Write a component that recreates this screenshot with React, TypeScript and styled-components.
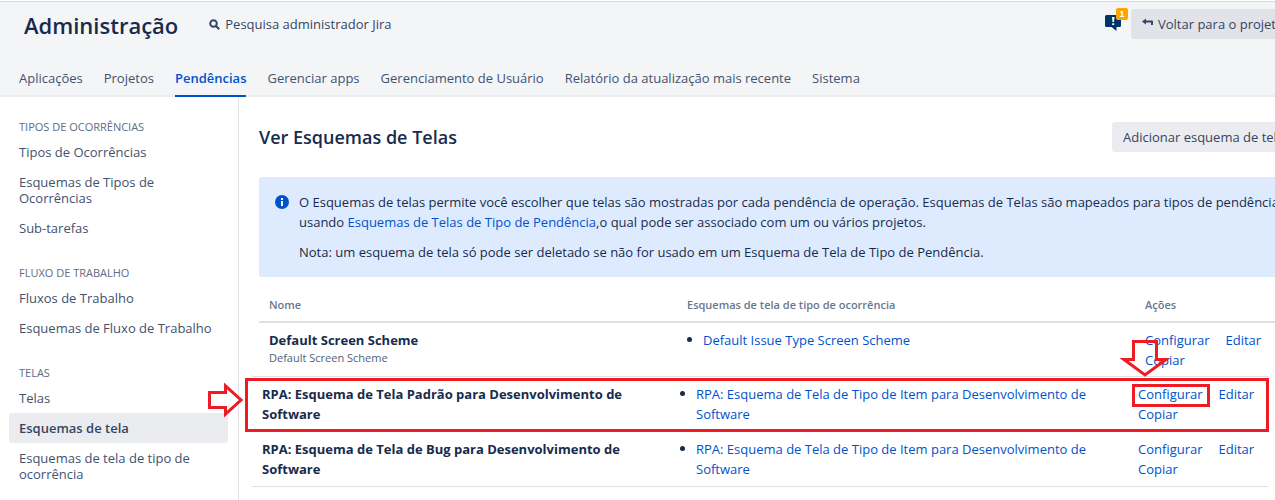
import React from 'react';
import styled, { createGlobalStyle, css } from 'styled-components';

const GlobalStyle = createGlobalStyle`
  * { box-sizing: border-box; }
  body {
    margin: 0;
    background: #fff;
    color: #172b4d;
    font: 13px/20px "Open Sans", "Noto Sans", sans-serif;
    overflow: hidden;
  }
  h1, h2, h3, p, ul { margin: 0; padding: 0; }
  ul { list-style: none; }
`;

const Page = styled.div`
  overflow: hidden;
  padding-top: 1px;
`;

const Header = styled.header`
  background: #f4f5f7;
  border-top: 1px solid #d5d9e0;
  border-bottom: 2px solid #ebecf0;
`;

const TopBar = styled.div`
  display: flex;
  align-items: center;
  padding: 6px 0 0 24px;
  margin-right: -28px;
`;

const SiteTitle = styled.h1`
  font-size: 22px;
  line-height: 30px;
  font-weight: 600;
  padding-top: 2px;
`;

const SearchLink = styled.a`
  display: flex;
  align-items: center;
  gap: 5px;
  margin-left: 31px;
  color: #344563;
  text-decoration: none;
`;

const Feedback = styled.button`
  position: relative;
  display: flex;
  margin-left: auto;
  margin-right: 10px;
  padding: 0 0 2px;
  border: 0;
  background: none;
`;

const Badge = styled.span`
  position: absolute;
  top: -7px;
  right: -7px;
  width: 12px;
  height: 12px;
  border-radius: 2px;
  background: #ffa500;
  color: #fff;
  font-size: 9px;
  line-height: 12px;
  font-weight: 700;
  text-align: center;
`;

const Button = styled.button<{ $width: number; $strong?: boolean }>`
  display: flex;
  align-items: center;
  gap: 4px;
  flex: none;
  width: ${(p) => p.$width}px;
  height: 30px;
  padding: 0 11px;
  border: 0;
  border-radius: 3px;
  background: ${(p) => (p.$strong ? '#e1e3e9' : '#ebecf0')};
  color: #344563;
  font: inherit;
  white-space: nowrap;
`;

const Tabs = styled.nav`
  display: flex;
  gap: 21px;
  padding: 28px 19px 0;
`;

const Tab = styled.a<{ $active?: boolean }>`
  padding-bottom: 7px;
  margin-bottom: -2px;
  border-bottom: 2px solid transparent;
  color: #42526e;
  text-decoration: none;
  white-space: nowrap;
  ${(p) => p.$active && css`
    color: #0052cc;
    font-weight: 600;
    border-color: #0052cc;
  `}
`;

const Body = styled.div`
  display: flex;
`;

const Sidebar = styled.aside`
  display: flex;
  flex-direction: column;
  gap: 20px;
  flex: 0 0 239px;
  padding: 20px 10px 20px 9px;
  border-right: 1px solid #dfe1e6;
`;

const GroupTitle = styled.h3`
  padding: 0 10px;
  color: #5e6c84;
  font-size: 11px;
  line-height: 20px;
  font-weight: 500;
  text-transform: uppercase;
`;

const SideLink = styled.a<{ $active?: boolean }>`
  display: block;
  padding: 7px 10px;
  border-radius: 3px;
  color: #42526e;
  line-height: 16px;
  text-decoration: none;
  ${(p) => p.$active && css`
    background: #ebecf0;
    color: #344563;
    font-weight: 600;
  `}
`;

const Main = styled.main`
  flex: 1;
  min-width: 0;
  padding: 25px 0 12px 20px;
`;

const TitleRow = styled.div`
  display: flex;
  align-items: center;
  justify-content: space-between;
  margin-right: -28px;
`;

const PageTitle = styled.h2`
  font-size: 18px;
  line-height: 30px;
  font-weight: 600;
`;

const Message = styled.section`
  display: flex;
  gap: 10px;
  margin: 25px -28px 0 0;
  padding: 15px 16px;
  border-radius: 3px;
  background: #deebff;
  white-space: nowrap;
  svg { flex: none; margin-top: 3px; }
  p + p { margin-top: 10px; }
`;

const Link = styled.a`
  color: #0052cc;
  text-decoration: none;
`;

const Table = styled.table`
  width: 100%;
  table-layout: fixed;
  border-collapse: separate;
  border-spacing: 0;
  col:nth-child(1) { width: 418px; }
  col:nth-child(3) { width: 140px; }
`;

const HeadCell = styled.th`
  padding: 18px 10px 6px;
  border-bottom: 2px solid #dfe1e6;
  color: #6b778c;
  font-size: 11px;
  line-height: 20px;
  font-weight: 600;
  text-align: left;
`;

const Cell = styled.td`
  padding: 7px 10px 6px;
  vertical-align: top;
`;

const RowsBelow = styled.div`
  position: relative;
  margin: 0 7px 0 -7px;
  border-top: 1px solid #dfe1e6;
  ${Cell} {
    padding: 7px 10px;
    border-bottom: 1px solid #dfe1e6;
  }
`;

const SchemeName = styled.strong`
  font-weight: 700;
`;

const Description = styled.div`
  color: #505f79;
  font-size: 11px;
  line-height: 16px;
`;

const SchemeList = styled.ul`
  list-style: none;
`;

const SchemeItem = styled.li`
  display: flex;
  gap: 11px;
  &::before {
    content: "";
    flex: none;
    width: 5px;
    height: 5px;
    margin-top: 7px;
    border-radius: 50%;
    background: #172b4d;
  }
`;

const Actions = styled.div`
  display: flex;
  flex-wrap: wrap;
  column-gap: 16px;
`;

const Anchor = styled.span`
  position: relative;
`;

const RowFrame = styled.div`
  position: absolute;
  top: 1px;
  left: -7px;
  right: -1px;
  height: 54px;
  border: 3px solid #ed1c24;
  pointer-events: none;
`;

const LinkFrame = styled.span`
  position: absolute;
  top: 0;
  left: -6px;
  right: -7px;
  height: 23px;
  border: 3px solid #ed1c24;
  pointer-events: none;
`;

const Arrow = styled.svg<{ $left: number; $top: number }>`
  position: absolute;
  left: ${(p) => p.$left}px;
  top: ${(p) => p.$top}px;
  fill: none;
  stroke: #ed1c24;
  stroke-width: 3;
  pointer-events: none;
`;

const tabs = ['Aplicações', 'Projetos', 'Pendências', 'Gerenciar apps', 'Gerenciamento de Usuário', 'Relatório da atualização mais recente', 'Sistema'];

const groups = [
  { title: 'Tipos de Ocorrências', links: ['Tipos de Ocorrências', 'Esquemas de Tipos de Ocorrências', 'Sub-tarefas'] },
  { title: 'Fluxo de Trabalho', links: ['Fluxos de Trabalho', 'Esquemas de Fluxo de Trabalho'] },
  { title: 'Telas', links: ['Telas', 'Esquemas de tela', 'Esquemas de tela de tipo de ocorrência'] },
];

type RowProps = { name: string; description?: string; scheme: string; marked?: boolean };

function SchemeRow({ name, description, scheme, marked }: RowProps) {
  return (
    <tr>
      <Cell>
        <SchemeName>{name}</SchemeName>
        {description && <Description>{description}</Description>}
      </Cell>
      <Cell>
        <SchemeList>
          <SchemeItem><Link href="#esquema">{scheme}</Link></SchemeItem>
        </SchemeList>
      </Cell>
      <Cell>
        <Actions>
          <Anchor>
            <Link href="#configurar">Configurar</Link>
            {marked && (
              <>
                <LinkFrame />
                <Arrow $left={-18} $top={-46} width="50" height="40" aria-hidden="true">
                  <path d="M13.5 3.5H36.5V21.5H46L25 37L4 21.5H13.5Z" />
                </Arrow>
              </>
            )}
          </Anchor>
          <Link href="#editar">Editar</Link>
          <Link href="#copiar">Copiar</Link>
        </Actions>
      </Cell>
    </tr>
  );
}

const Columns = () => (
  <colgroup><col /><col /><col /></colgroup>
);

export default function App() {
  return (
    <Page>
      <GlobalStyle />
      <Header>
        <TopBar>
          <SiteTitle>Administração</SiteTitle>
          <SearchLink href="#pesquisa">
            <svg width="11" height="11" viewBox="0 0 11 11" fill="none" stroke="#344563" strokeWidth="2" aria-hidden="true">
              <circle cx="4.5" cy="4.5" r="3.3" />
              <path d="M7 7L10.2 10.2" />
            </svg>
            Pesquisa administrador Jira
          </SearchLink>
          <Feedback aria-label="Notificações">
            <svg width="16" height="16" viewBox="0 0 16 16" aria-hidden="true">
              <path d="M1.5 0H14.5Q16 0 16 1.500V10.500Q16 12 14.500 12H11.500V16L6.500 12H1.500Q0 12 0 10.500V1.500Q0 0 1.500 0Z" fill="#003366" />
              <path d="M7 2H9.500L9 7H7.500ZM7.200 8.200H9.200V10H7.200Z" fill="#fff" />
            </svg>
            <Badge>1</Badge>
          </Feedback>
          <Button $width={172} $strong>
            <svg width="12" height="12" viewBox="0 0 12 12" fill="#344563" aria-hidden="true">
              <path d="M0 3.500L4 0.500V2.500H10Q11 2.500 11 3.500V7H9V4.500H4V6.500Z" />
            </svg>
            Voltar para o projeto
          </Button>
        </TopBar>
        <Tabs>
          {tabs.map((tab) => (
            <Tab key={tab} href="#aba" $active={tab === 'Pendências'}>{tab}</Tab>
          ))}
        </Tabs>
      </Header>
      <Body>
        <Sidebar>
          {groups.map((group) => (
            <nav key={group.title} aria-label={group.title}>
              <GroupTitle>{group.title}</GroupTitle>
              {group.links.map((link) => (
                <SideLink key={link} href="#secao" $active={link === 'Esquemas de tela'}>{link}</SideLink>
              ))}
            </nav>
          ))}
        </Sidebar>
        <Main>
          <TitleRow>
            <PageTitle>Ver Esquemas de Telas</PageTitle>
            <Button $width={191}>Adicionar esquema de tela</Button>
          </TitleRow>
          <Message>
            <svg width="14" height="14" viewBox="0 0 14 14" aria-hidden="true">
              <circle cx="7" cy="7" r="7" fill="#0052cc" />
              <path d="M6 3H8V5H6ZM6 6H8V11H6Z" fill="#fff" />
            </svg>
            <div>
              <p>
                O Esquemas de telas permite você escolher que telas são mostradas por cada pendência de operação. Esquemas de Telas são mapeados para tipos de pendências
                <br />
                usando <Link href="#tipos">Esquemas de Telas de Tipo de Pendência</Link>,o qual pode ser associado com um ou vários projetos.
              </p>
              <p>Nota: um esquema de tela só pode ser deletado se não for usado em um Esquema de Tela de Tipo de Pendência.</p>
            </div>
          </Message>
          <Table>
            <Columns />
            <thead>
              <tr>
                <HeadCell>Nome</HeadCell>
                <HeadCell>Esquemas de tela de tipo de ocorrência</HeadCell>
                <HeadCell>Ações</HeadCell>
              </tr>
            </thead>
            <tbody>
              <SchemeRow name="Default Screen Scheme" description="Default Screen Scheme" scheme="Default Issue Type Screen Scheme" />
            </tbody>
          </Table>
          <RowsBelow>
            <Table aria-label="Esquemas do projeto RPA">
              <Columns />
              <tbody>
                <SchemeRow
                  name="RPA: Esquema de Tela Padrão para Desenvolvimento de Software"
                  scheme="RPA: Esquema de Tela de Tipo de Item para Desenvolvimento de Software"
                  marked
                />
                <SchemeRow
                  name="RPA: Esquema de Tela de Bug para Desenvolvimento de Software"
                  scheme="RPA: Esquema de Tela de Tipo de Item para Desenvolvimento de Software"
                />
              </tbody>
            </Table>
            <RowFrame />
            <Arrow $left={-46} $top={5} width="40" height="38" aria-hidden="true">
              <path d="M3.5 10.5H19.5V4L35 18L19.5 32V25.5H3.5Z" />
            </Arrow>
          </RowsBelow>
        </Main>
      </Body>
    </Page>
  );
}
